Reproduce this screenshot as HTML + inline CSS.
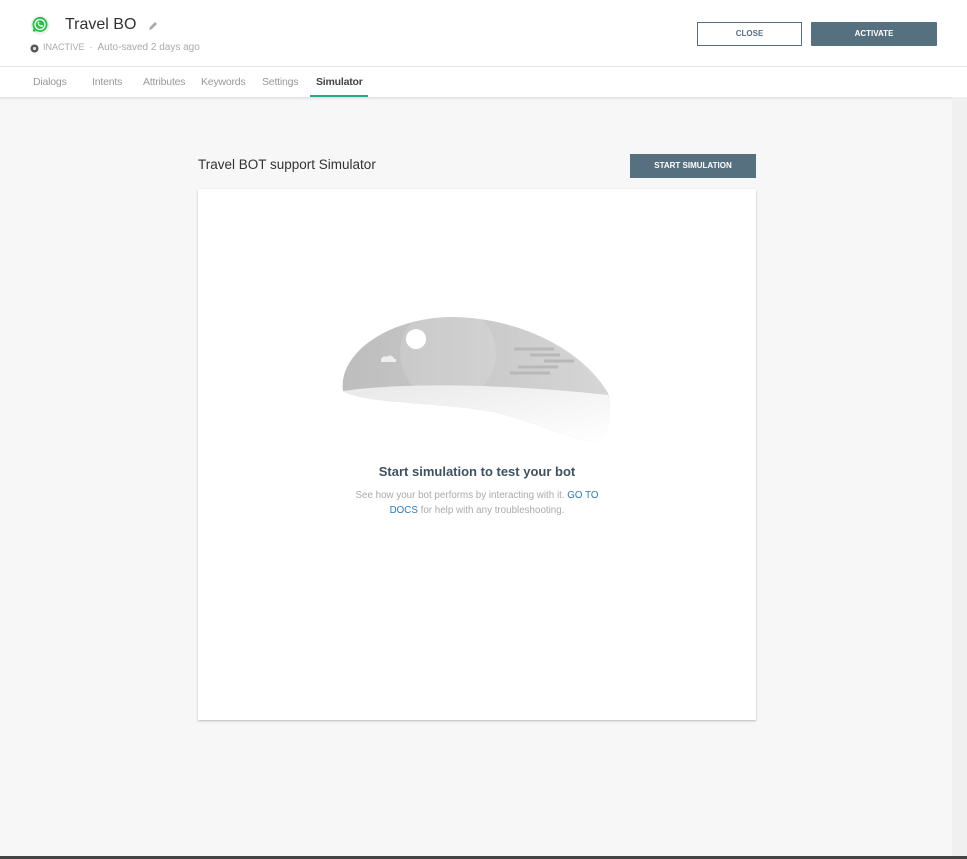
<!DOCTYPE html>
<html><head><style>
body{margin:0;width:967px;height:859px;overflow:hidden;background:#f7f7f7;font-family:"Liberation Sans",sans-serif;position:relative}
.hdr{position:absolute;left:0;top:0;width:967px;height:97px;background:#fff;border-bottom:1px solid #e2e2e2;box-shadow:0 1px 2px rgba(0,0,0,.08)}
.line{position:absolute;left:0;top:66px;width:967px;height:1px;background:#e4e4e4}
.title{position:absolute;left:65px;top:16px;font-size:16px;color:#333}
.sub{position:absolute;left:43px;top:42px;font-size:9px;color:#aaa}
.tabs{position:absolute;top:76px;font-size:10.5px;color:#999;letter-spacing:-.2px}
.btn{position:absolute;font-size:8px;font-weight:bold;text-align:center;box-sizing:border-box}
.sb{position:absolute;left:952px;top:97px;width:15px;height:760px;background:#f0f0f0}
.card{position:absolute;left:198px;top:189px;width:558px;height:531px;background:#fff;box-shadow:0 1px 2px rgba(0,0,0,.25)}
</style></head><body>
<div class="hdr"></div><div class="line"></div>
<svg style="position:absolute;left:30px;top:15px" width="20" height="20" viewBox="0 0 20 20"><circle cx="10" cy="10" r="9.5" fill="#eee"/><circle cx="10" cy="9.5" r="7.5" fill="#25c246"/><path d="M4 16.5l1-3.5" stroke="#25c246" stroke-width="2.5"/><circle cx="10" cy="9.5" r="5" fill="none" stroke="#fff" stroke-width="1.3"/><path d="M7.5 7c0 3 2 5 5 5l.5-1.5-1.5-.8-.8.8c-1-.5-1.6-1.1-2-2l.8-.8L8.8 6.5z" fill="#fff"/></svg>
<div class="title">Travel BO</div>
<svg style="position:absolute;left:148px;top:21px" width="10" height="10"><path d="M1 9l1-3 5-5 2 2-5 5z" fill="#aaa"/></svg>
<svg style="position:absolute;left:30px;top:44px" width="9" height="9"><circle cx="4.5" cy="4.5" r="4" fill="#555"/><circle cx="4.5" cy="4.5" r="1.6" fill="#ddd"/></svg>
<div class="sub">INACTIVE &nbsp;·&nbsp; <span style="font-size:10px">Auto-saved 2 days ago</span></div>
<div class="tabs" style="left:33px">Dialogs</div>
<div class="tabs" style="left:92px">Intents</div>
<div class="tabs" style="left:143px">Attributes</div>
<div class="tabs" style="left:201px">Keywords</div>
<div class="tabs" style="left:262px">Settings</div>
<div class="tabs" style="left:316px;color:#444;font-weight:bold">Simulator</div>
<div style="position:absolute;left:310px;top:95px;width:58px;height:2px;background:#26a98a"></div>
<div class="btn" style="left:697px;top:22px;width:105px;height:24px;border:1px solid #56707f;color:#56707f;line-height:22px">CLOSE</div>
<div class="btn" style="left:811px;top:22px;width:126px;height:24px;background:#56707f;color:#fff;line-height:24px;border-radius:1px">ACTIVATE</div>
<div class="sb"></div>
<div style="position:absolute;left:0;top:856px;width:967px;height:3px;background:#444"></div>
<div style="position:absolute;left:198px;top:157px;font-size:13.5px;color:#333">Travel BOT support Simulator</div>
<div class="btn" style="left:630px;top:154px;width:126px;height:24px;background:#56707f;color:#fff;line-height:24px">START SIMULATION</div>
<div class="card">
<svg style="position:absolute;left:140px;top:124px" width="275" height="132" viewBox="0 0 275 132">
<defs><linearGradient id="g" x1="0" y1="0" x2="1" y2="0"><stop offset="0" stop-color="#bdbdbd"/><stop offset="1" stop-color="#d6d6d6"/></linearGradient><linearGradient id="w" x1="0" y1="0" x2="1" y2="1"><stop offset="0" stop-color="#e8e8e8"/><stop offset="1" stop-color="#fff"/></linearGradient></defs>
<path d="M5 78C0 40 50 6 110 4 170 3 240 30 270 80 275 100 270 125 262 128 240 130 200 110 160 100 100 88 30 92 5 78z" fill="url(#g)"/>
<circle cx="110" cy="40" r="48" fill="#fff" opacity=".12"/>
<path d="M5 78C60 70 160 70 270 82 275 100 270 125 262 128 240 130 200 110 160 100 100 88 30 92 5 78z" fill="url(#w)"/>
<circle cx="78" cy="26" r="10" fill="#fff"/>
<path d="M43 48a4 4 0 0 1 6-4 4 4 0 0 1 7 2h2v3H43z" fill="#eee"/>
<g stroke="#b8b8b8" stroke-width="3"><path d="M176 36h40M192 42h30M206 48h30M180 54h40M172 60h40"/></g>
</svg>
<div style="position:absolute;left:0;width:558px;top:275px;text-align:center;font-size:13px;font-weight:bold;color:#3e5260">Start simulation to test your bot</div>
<div style="position:absolute;left:148px;width:262px;top:299px;text-align:center;font-size:9.8px;line-height:15px;color:#aaa">See how your bot performs by interacting with it. <span style="color:#2b7ab8">GO TO DOCS</span> for help with any troubleshooting.</div>
</div>
</body></html>
